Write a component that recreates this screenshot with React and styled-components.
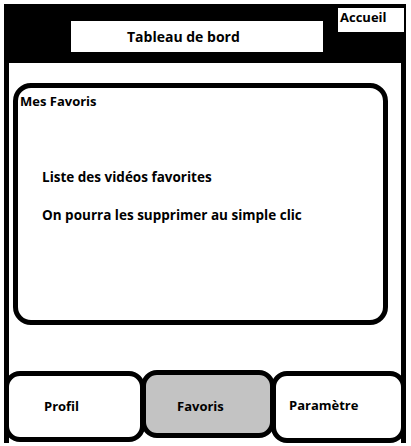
import styled, { createGlobalStyle } from 'styled-components'

const GlobalStyle = createGlobalStyle`
  html, body {
    margin: 0;
    padding: 0;
    background: #fff;
  }
  body {
    font-family: "Open Sans", "DejaVu Sans", sans-serif;
    color: #000;
  }
`

const StyledPage = styled.div`
  width: 411px;
  height: 446px;
  padding: 4px 5px 0 4px;
  box-sizing: border-box;
  overflow: hidden;
`

const StyledFrame = styled.div`
  display: flex;
  flex-direction: column;
  width: 402px;
  height: 439px;
`

const StyledHeader = styled.div`
  display: flex;
  align-items: flex-start;
  height: 59px;
  background: #000;
  flex-shrink: 0;
`

const StyledTitleBox = styled.div`
  display: flex;
  align-items: center;
  margin: 17px 0 0 67px;
  padding-left: 56px;
  width: 252px;
  height: 31px;
  box-sizing: border-box;
  background: #fff;
  font-size: 14px;
  font-weight: 700;
`

const StyledHomeBox = styled.div`
  margin: 4px 0 0 15px;
  width: 66px;
  height: 24px;
  padding: 1px 0 0 2px;
  box-sizing: border-box;
  background: #fff;
  font-size: 13px;
  font-weight: 700;
  line-height: 16px;
`

const StyledBody = styled.div`
  flex: 1;
  display: flex;
  flex-direction: column;
  justify-content: space-between;
  border-left: 5px solid #000;
  border-right: 5px solid #000;
  padding-top: 20px;
`

const StyledCard = styled.div`
  margin-left: 4px;
  width: 375px;
  height: 242px;
  box-sizing: border-box;
  border: 5px solid #000;
  border-radius: 18px;
  padding: 4px 0 0 2px;
`

const StyledCardTitle = styled.div`
  font-size: 13px;
  font-weight: 700;
  line-height: 18px;
`

const StyledList = styled.div`
  display: flex;
  flex-direction: column;
  gap: 20px;
  margin: 58px 0 0 22px;
`

const StyledLine = styled.div`
  font-size: 13.5px;
  font-weight: 700;
  line-height: 18px;
`

const StyledTabs = styled.div`
  display: flex;
  align-items: flex-start;
  margin: 0 -5px 0 -5px;
`

const StyledTab = styled.div`
  display: flex;
  align-items: center;
  width: ${(p) => p.w}px;
  height: ${(p) => p.h}px;
  margin-left: ${(p) => p.ml}px;
  margin-top: ${(p) => p.mt}px;
  padding: ${(p) => p.pad};
  box-sizing: border-box;
  border: 5px solid #000;
  border-radius: 16px;
  background: ${(p) => (p.active ? '#c3c3c3' : '#fff')};
  font-size: 13px;
  font-weight: 700;
  position: relative;
  z-index: ${(p) => (p.active ? 2 : 1)};
`

const App = () => {
  return (
    <>
      <GlobalStyle />
      <StyledPage>
        <StyledFrame>
          <StyledHeader>
            <StyledTitleBox>Tableau de bord</StyledTitleBox>
            <StyledHomeBox>Accueil</StyledHomeBox>
          </StyledHeader>
          <StyledBody>
            <StyledCard>
              <StyledCardTitle>Mes Favoris</StyledCardTitle>
              <StyledList>
                <StyledLine>Liste des vidéos favorites</StyledLine>
                <StyledLine>On pourra les supprimer au simple clic</StyledLine>
              </StyledList>
            </StyledCard>
            <StyledTabs>
              <StyledTab w={141} h={71} ml={0} mt={1} pad="0 0 2px 35px">
                Profil
              </StyledTab>
              <StyledTab w={134} h={68} ml={-4} mt={0} pad="4px 0 0 31px" active>
                Favoris
              </StyledTab>
              <StyledTab w={135} h={72} ml={-4} mt={1} pad="0 0 4px 13px">
                Paramètre
              </StyledTab>
            </StyledTabs>
          </StyledBody>
        </StyledFrame>
      </StyledPage>
    </>
  )
}

export default App
